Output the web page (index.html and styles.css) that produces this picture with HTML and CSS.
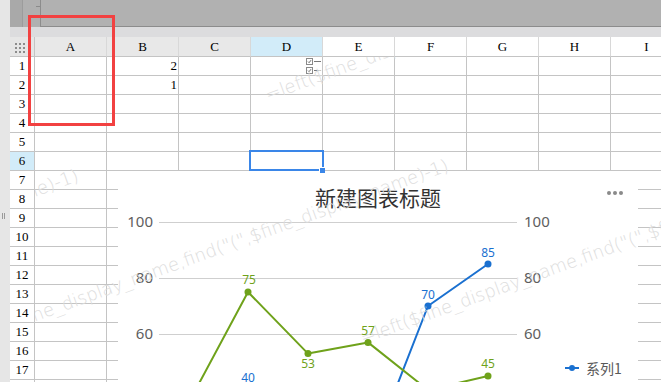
FILE: index.html
```html
<!DOCTYPE html>
<html lang="zh-CN">
<head>
    <meta charset="UTF-8">
    <meta name="viewport" content="width=device-width, initial-scale=1.0">
    <title>报表设计</title>
    <link rel="stylesheet" href="styles.css">
</head>
<body>
    <div class="strip"><span class="grip"></span></div>
    <div class="main">
        <div class="topbar">
            <div class="tb-left"></div>
            <div class="tb-mid"><span class="tick"></span></div>
            <div class="tb-main"></div>
        </div>
        <div class="band"></div>
        <div class="sheet" id="sheet"></div>
    </div>

    <div class="chart">
        <div class="chart-head">
            <div class="chart-title">新建图表标题</div>
            <div class="chart-menu"><span></span><span></span><span></span></div>
        </div>
        <div class="chart-body">
            <svg class="plot" width="440" height="336" viewBox="0 0 440 336">
                <g class="grid">
                    <line x1="41" y1="11.5" x2="399" y2="11.5"/>
                    <line x1="41" y1="67.5" x2="399" y2="67.5"/>
                    <line x1="41" y1="123.5" x2="399" y2="123.5"/>
                    <line x1="41" y1="179.5" x2="399" y2="179.5"/>
                    <line x1="41" y1="235.5" x2="399" y2="235.5"/>
                    <line x1="41" y1="291.5" x2="399" y2="291.5"/>
                </g>
                <g class="axis" text-anchor="end">
                    <text x="35" y="16">100</text>
                    <text x="35" y="72">80</text>
                    <text x="35" y="128">60</text>
                    <text x="35" y="184">40</text>
                    <text x="35" y="240">20</text>
                    <text x="35" y="296">0</text>
                </g>
                <g class="axis">
                    <text x="406" y="16">100</text>
                    <text x="406" y="72">80</text>
                    <text x="406" y="128">60</text>
                    <text x="406" y="184">40</text>
                    <text x="406" y="240">20</text>
                    <text x="406" y="296">0</text>
                </g>
                <g class="series blue">
                    <polyline points="70,212.6 130,179 190,229.4 250,249 310,95 370,53"/>
                    <circle cx="70" cy="212.6" r="3.5"/>
                    <circle cx="130" cy="179" r="3.5"/>
                    <circle cx="190" cy="229.4" r="3.5"/>
                    <circle cx="250" cy="249" r="3.5"/>
                    <circle cx="310" cy="95" r="3.5"/>
                    <circle cx="370" cy="53" r="3.5"/>
                    <text x="70" y="205">28</text>
                    <text x="130" y="171">40</text>
                    <text x="190" y="222">22</text>
                    <text x="250" y="241">15</text>
                    <text x="310" y="88">70</text>
                    <text x="370" y="46">85</text>
                </g>
                <g class="series green">
                    <polyline points="70,193 130,81 190,142.6 250,131.4 310,179 370,165"/>
                    <circle cx="70" cy="193" r="3.5"/>
                    <circle cx="130" cy="81" r="3.5"/>
                    <circle cx="190" cy="142.6" r="3.5"/>
                    <circle cx="250" cy="131.4" r="3.5"/>
                    <circle cx="310" cy="179" r="3.5"/>
                    <circle cx="370" cy="165" r="3.5"/>
                    <text x="70" y="186">35</text>
                    <text x="131" y="73">75</text>
                    <text x="190" y="157">53</text>
                    <text x="250" y="124">57</text>
                    <text x="310" y="196">40</text>
                    <text x="370" y="157">45</text>
                </g>
            </svg>
            <ul class="legend">
                <li><svg width="14" height="8" viewBox="0 0 14 8"><line x1="0" y1="4" x2="14" y2="4" stroke="#1a70d0" stroke-width="2"/><circle cx="7" cy="4" r="3" fill="#1a70d0"/></svg>系列1</li>
                <li><svg width="14" height="8" viewBox="0 0 14 8"><line x1="0" y1="4" x2="14" y2="4" stroke="#6fa21b" stroke-width="2"/><circle cx="7" cy="4" r="3" fill="#6fa21b"/></svg>系列2</li>
            </ul>
        </div>
    </div>

    <div class="watermarks">
        <span class="wm wm-a">=left($fine_display_name,find("(",$fine_display_name)-1)</span>
        <span class="wm wm-b">=left($fine_display_name,find("(",$fine_display_name)-1)</span>
        <span class="wm wm-c">=left($fine_display_name,find("(",$fine_display_name)-1)</span>
        <span class="wm wm-d">=left($fine_display_name,find("(",$fine_display_name)-1)</span>
    </div>

    <div class="selection"><span class="handle"></span></div>
    <div class="mark"></div>

    <script>
        const cols = ['A', 'B', 'C', 'D', 'E', 'F', 'G', 'H', 'I'];
        const values = { B1: '2', B2: '1' };
        const check = '<svg width="15" height="7" viewBox="0 0 15 7"><rect x="0.5" y="0.5" width="6" height="6" fill="#fff" stroke="#8a8a8a"/><path d="M2 3.6 L3.1 4.7 L5 2.2" fill="none" stroke="#6a6a6a" stroke-width="1"/><line x1="8" y1="3.5" x2="15" y2="3.5" stroke="#7a7a7a"/></svg>';
        const sheet = document.getElementById('sheet');

        // 表头
        let html = '<div class="corner"><span class="dots"></span></div>';
        cols.forEach((c, i) => {
            let cls = 'col-head';
            if (i < 3) cls += ' dim';
            if (c === 'D') cls += ' active';
            html += '<div class="' + cls + '">' + c + '</div>';
        });

        // 行
        for (let r = 1; r <= 18; r++) {
            html += '<div class="row-head' + (r === 6 ? ' active' : '') + '">' + r + '</div>';
            cols.forEach(c => {
                const key = c + r;
                if (key === 'D1') {
                    html += '<div class="cell checks">' + check + check + '</div>';
                } else {
                    html += '<div class="cell">' + (values[key] || '') + '</div>';
                }
            });
        }
        sheet.innerHTML = html;
    </script>
</body>
</html>
```

FILE: styles.css
```css
body {
    margin: 0;
    width: 661px;
    height: 382px;
    overflow: hidden;
    position: relative;
    display: flex;
    background-color: #fff;
    font-family: "Liberation Serif", serif;
}
.strip {
    flex: none;
    width: 10px;
    position: relative;
    background-color: #e6e6e6;
}
.grip {
    position: absolute;
    left: 2px;
    top: 213px;
    width: 1px;
    height: 6px;
    border-left: 1px solid #9a9a9a;
    border-right: 1px solid #9a9a9a;
}
.main {
    flex: 1;
    min-width: 0;
    display: flex;
    flex-direction: column;
    overflow: hidden;
}
.topbar {
    flex: none;
    height: 27px;
    display: flex;
}
.tb-left {
    width: 12px;
    background-color: #a9a9a9;
    border-right: 1px solid #9c9c9c;
}
.tb-mid {
    width: 17px;
    position: relative;
    background-color: #b0b0b0;
}
.tick {
    position: absolute;
    right: 0;
    top: 6px;
    width: 4px;
    height: 1px;
    background-color: #8a8a8a;
}
.tb-main {
    flex: 1;
    background-color: #b1b1b1;
    border-left: 1px solid #8c8c8c;
    border-bottom: 1px solid #8c8c8c;
}
.band {
    flex: none;
    height: 10px;
    background-color: #dcdcde;
}
.sheet {
    display: grid;
    grid-template-columns: 25px repeat(9, 72px);
    grid-template-rows: 20px;
    grid-auto-rows: 19px;
    font-size: 13px;
    color: #000;
}
.sheet > div {
    box-sizing: border-box;
    border-right: 1px solid #c4c4c4;
    border-bottom: 1px solid #c4c4c4;
    line-height: 18px;
}
.corner {
    background-color: #e6e6e6;
}
.dots {
    display: block;
    width: 2px;
    height: 2px;
    margin: 6px 0 0 5px;
    background-color: #8c8c8c;
    box-shadow: 4px 0 #8c8c8c, 8px 0 #8c8c8c,
        0 4px #8c8c8c, 4px 4px #8c8c8c, 8px 4px #8c8c8c,
        0 8px #8c8c8c, 4px 8px #8c8c8c, 8px 8px #8c8c8c;
}
.sheet .col-head {
    text-align: center;
    line-height: 19px;
    background-color: #fff;
    border-right-color: #d8d8d8;
}
.col-head.dim {
    background-color: #e8e8e8;
}
.col-head.active,
.row-head.active {
    background-color: #d2ecf9;
}
.row-head {
    text-align: center;
    background-color: #fff;
}
.cell {
    text-align: right;
    padding-right: 1px;
}
.checks {
    display: flex;
    flex-direction: column;
    align-items: flex-end;
    justify-content: center;
    gap: 2px;
}
.checks svg {
    display: block;
}

/* 图表 */
.chart {
    position: absolute;
    left: 118px;
    top: 171px;
    z-index: 1;
    width: 520px;
    height: 376px;
    display: flex;
    flex-direction: column;
    background-color: #fff;
}
.chart-head {
    position: relative;
    height: 40px;
    flex: none;
}
.chart-title {
    padding-top: 13px;
    text-align: center;
    font-family: "Noto Sans CJK SC", sans-serif;
    font-size: 21px;
    line-height: 26px;
    color: #333;
}
.chart-menu {
    position: absolute;
    right: 15px;
    top: 20px;
    display: flex;
    gap: 2px;
}
.chart-menu span {
    width: 4px;
    height: 4px;
    border-radius: 50%;
    background-color: #8a8a8a;
}
.chart-body {
    flex: 1;
    display: flex;
}
.plot {
    display: block;
    flex: none;
}
.grid line {
    stroke: #cfcfcf;
    stroke-width: 1;
}
.axis text {
    font-family: "Noto Sans", sans-serif;
    font-size: 15px;
    fill: #5e5e5e;
}
.series polyline {
    fill: none;
    stroke-width: 2;
    stroke-linejoin: round;
}
.series text {
    font-family: "Noto Sans", sans-serif;
    font-size: 12px;
    text-anchor: middle;
}
.blue polyline { stroke: #1a70d0; }
.blue circle, .blue text { fill: #1a70d0; }
.green polyline { stroke: #6fa21b; }
.green circle, .green text { fill: #6fa21b; }
.legend {
    list-style: none;
    margin: 0;
    padding: 0 0 0 7px;
    display: flex;
    flex-direction: column;
    justify-content: center;
}
.legend li {
    display: flex;
    align-items: center;
    gap: 7px;
    height: 22px;
    font-family: "Noto Sans CJK SC", sans-serif;
    font-size: 14px;
    color: #595959;
}

/* 水印 */
.watermarks {
    position: absolute;
    left: 35px;
    top: 57px;
    right: 0;
    bottom: 0;
    z-index: 2;
    overflow: hidden;
    pointer-events: none;
}
.wm {
    position: absolute;
    white-space: nowrap;
    font-family: "DejaVu Sans", sans-serif;
    font-weight: 200;
    font-size: 18px;
    line-height: 18px;
    color: #dddddd;
    transform-origin: 0 15px;
    transform: rotate(-20deg);
}
.wm-a { left: 233px; top: 29px; }
.wm-b { left: -440px; top: 285px; }
.wm-c { left: -70px; top: 275px; }
.wm-d { left: 328px; top: 272px; }

.selection {
    position: absolute;
    left: 249px;
    top: 150px;
    z-index: 3;
    width: 75px;
    height: 21px;
    box-sizing: border-box;
    border: 2px solid #3a86e8;
}
.handle {
    position: absolute;
    left: 68px;
    top: 15px;
    width: 5px;
    height: 5px;
    background-color: #3a86e8;
    border-left: 1px solid #fff;
    border-top: 1px solid #fff;
}
.mark {
    position: absolute;
    left: 28px;
    top: 15px;
    z-index: 4;
    width: 87px;
    height: 111px;
    box-sizing: border-box;
    border: 3px solid #f24141;
}
```
